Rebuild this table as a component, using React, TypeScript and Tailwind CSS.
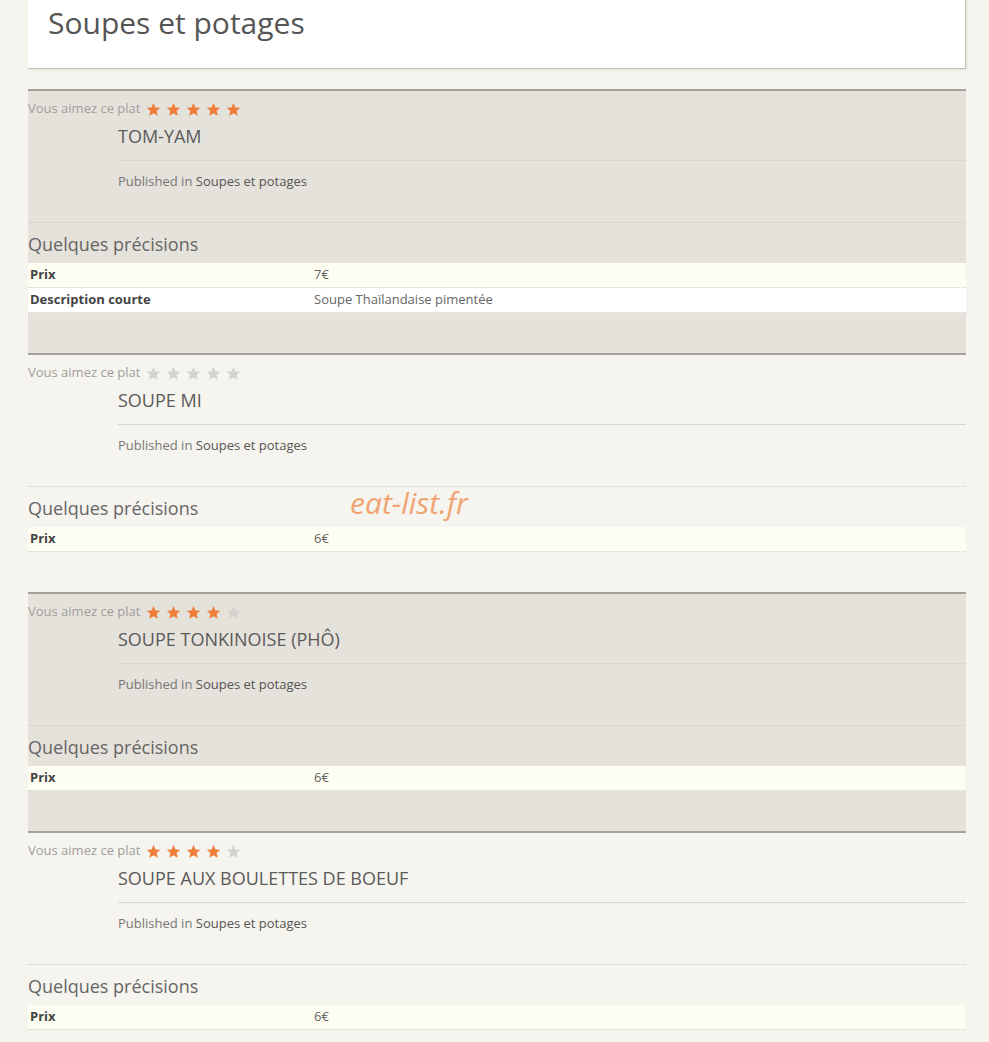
import React from "react";

type Row = { label: string; value: string };
type Item = { title: string; rating: number; rows: Row[]; shaded: boolean };

const items: Item[] = [
  {
    title: "TOM-YAM",
    rating: 5,
    shaded: true,
    rows: [
      { label: "Prix", value: "7€" },
      { label: "Description courte", value: "Soupe Thaïlandaise pimentée" },
    ],
  },
  { title: "SOUPE MI", rating: 0, shaded: false, rows: [{ label: "Prix", value: "6€" }] },
  { title: "SOUPE TONKINOISE (PHÔ)", rating: 4, shaded: true, rows: [{ label: "Prix", value: "6€" }] },
  { title: "SOUPE AUX BOULETTES DE BOEUF", rating: 4, shaded: false, rows: [{ label: "Prix", value: "6€" }] },
];

function Star({ on }: { on: boolean }) {
  return (
    <svg width="15" height="15" viewBox="0 0 24 24" className="shrink-0">
      <path
        d="M12 1.5l3.2 7.1 7.6.7-5.8 5.1 1.8 7.6L12 18l-6.8 4 1.8-7.6L1.2 9.3l7.6-.7z"
        fill={on ? "#ee7d39" : "#d4d2cd"}
      />
    </svg>
  );
}

function Entry({ item }: { item: Item }) {
  return (
    <div className={`border-t-2 border-[#a4a19b] pb-[40px] ${item.shaded ? "bg-[#e5e2db]" : ""}`}>
      <div className="flex items-center h-[20px] mt-[8px] text-[13px] text-[#a09e9a]">
        <span>Vous aimez ce plat</span>
        <div className="flex gap-[5px] ml-[6px]">
          {[0, 1, 2, 3, 4].map((i) => (
            <Star key={i} on={i < item.rating} />
          ))}
        </div>
      </div>
      <div className="ml-[90px]">
        <div className="mt-[5px] text-[18px] leading-[24px] text-[#5a5a5a] pb-[12px] border-b border-[#d9d6cf]">
          {item.title}
        </div>
        <div className="pt-[10px] text-[13px] leading-[20px] text-[#777]">
          Published in <span className="text-[#555]">Soupes et potages</span>
        </div>
      </div>
      <div className="mt-[31px] border-t border-dotted border-[#cfccc5]" />
      <div className="pt-[8px] text-[18px] leading-[26px] text-[#666]">Quelques précisions</div>
      <div className="mt-[6px]">
        {item.rows.map((r, i) => (
          <div
            key={i}
            className={`flex h-[25px] items-center border-b border-dotted border-[#cfccc5] text-[13px] ${
              i % 2 === 0 ? "bg-[#fdfdf1]" : "bg-white"
            }`}
          >
            <div className="w-[286px] pl-[2px] font-bold text-[#444]">{r.label}</div>
            <div className="text-[#666]">{r.value}</div>
          </div>
        ))}
      </div>
    </div>
  );
}

export default function App() {
  return (
    <div className="min-h-screen bg-[#f6f4ee] font-['Open_Sans',sans-serif] relative">
      <div className="ml-[28px] w-[938px]">
        <div className="bg-white h-[69px] border-b border-r border-[#c2bfb9] shadow-[1px_1px_2px_rgba(0,0,0,0.08)] pl-[20px] pt-[3px]">
          <h1 className="text-[30px] leading-[40px] text-[#555]">Soupes et potages</h1>
        </div>
        <div className="mt-[20px]">
          {items.map((it, i) => (
            <Entry key={i} item={it} />
          ))}
        </div>
      </div>
      <div className="absolute left-[350px] top-[484px] text-[30px] italic text-[#f0a474] leading-[38px]">
        eat-list.fr
      </div>
    </div>
  );
}
